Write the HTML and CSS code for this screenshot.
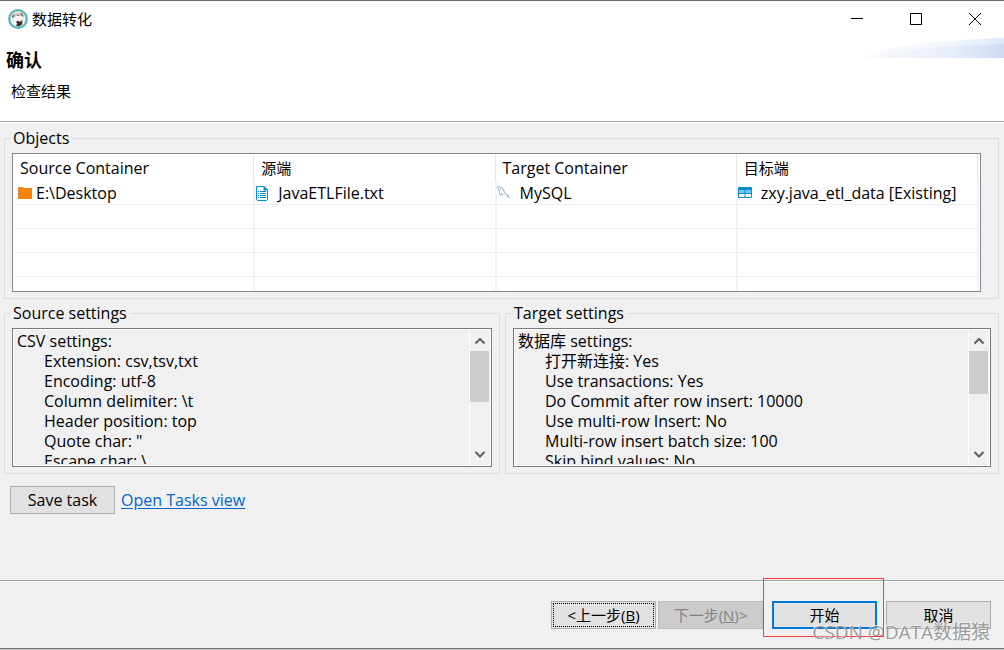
FILE: index.html
```html
<!DOCTYPE html>
<html lang="zh-CN">
<head>
<meta charset="utf-8">
<title>数据转化</title>
<link rel="stylesheet" href="styles.css">
</head>
<body>
<div class="window">
  <header class="banner">
    <div class="titlebar">
      <svg class="app-icon" width="20" height="20" viewBox="0 0 20 20" aria-hidden="true">
        <circle cx="10" cy="10" r="8.8" fill="#f3f1ef" stroke="#55b4b8" stroke-width="2.2"/>
        <path d="M4 8Q4 4 8 4L12 3.500Q15 4 16 7L15.500 9L13 7L8 7L6 9Z" fill="#c9c2bf"/>
        <path d="M4 7L5.500 6L6 7L4.500 9Z M9 6.500L11 6L10.500 7Z M12.500 4L14 4.500L15.500 7L14 6.500Z" fill="#51413d"/>
        <path d="M8 13L10 11.500L11.500 13L14.500 11L14 15.500L11 17.500L7.500 16.500L9.500 15Z" fill="#3b2d29"/>
      </svg>
      <span class="title">数据转化</span>
      <div class="window-controls">
        <button class="control" type="button" aria-label="Minimize"><svg width="12" height="12" viewBox="0 0 12 12"><path d="M0 5.500H12"/></svg></button>
        <button class="control" type="button" aria-label="Maximize"><svg width="12" height="12" viewBox="0 0 12 12"><path d="M.5.5H11.500V11.500H.5Z"/></svg></button>
        <button class="control" type="button" aria-label="Close"><svg width="12" height="12" viewBox="0 0 12 12"><path d="M0 0L12 12M12 0L0 12"/></svg></button>
      </div>
    </div>
    <h1 class="heading">确认</h1>
    <p class="subheading">检查结果</p>
    <svg class="swoosh" width="140" height="20" viewBox="0 0 140 20" aria-hidden="true">
      <defs>
        <linearGradient id="back"><stop offset="0" stop-color="#fafbfe"/><stop offset=".6" stop-color="#f2f6fc"/><stop offset="1" stop-color="#dfe8f8"/></linearGradient>
        <linearGradient id="front"><stop offset="0" stop-color="#f9fafd"/><stop offset=".6" stop-color="#e8eef9"/><stop offset="1" stop-color="#d0daf5"/></linearGradient>
      </defs>
      <path d="M0 20Q22 4 140 0V20Z" fill="url(#back)"/>
      <path d="M0 20Q38 9 140 6V20Z" fill="url(#front)"/>
    </svg>
  </header>

  <main class="content">
    <fieldset class="group objects">
      <legend>Objects</legend>
      <div class="table-box">
        <table class="grid">
          <thead>
            <tr><th>Source Container</th><th class="cjk">源端</th><th>Target Container</th><th class="cjk">目标端</th></tr>
          </thead>
          <tbody>
            <tr>
              <td><div class="cell"><svg width="22" height="16" viewBox="0 0 22 16" aria-hidden="true"><path d="M4 2.500Q4 2 4.500 2H8.500L10 3H17.500Q18 3 18 3.500V13.500Q18 14 17.500 14H4.500Q4 14 4 13.500Z" fill="#f28411"/></svg><span>E:\Desktop</span></div></td>
              <td><div class="cell spaced"><svg width="16" height="16" viewBox="0 0 16 16" aria-hidden="true"><path d="M1.500 1.500H9L12.500 5V14.500L11.500 15.500H2.500L1.500 14.500Z" fill="#fff" stroke="#008fcb"/><path d="M8.500 1V5.500H13L9 1Z" fill="#008fcb"/><path d="M3 6.500H4M5 6.500H11M3 8.500H4M5 8.500H11M3 10.500H4M5 10.500H11M3 12.500H4M5 12.500H11" stroke="#008fcb"/></svg><span>JavaETLFile.txt</span></div></td>
              <td><div class="cell spaced"><svg width="16" height="16" viewBox="0 0 16 16" fill="none" aria-hidden="true"><path d="M.5 1.500L3 2Q6 3 7.500 7Q8.500 10 11.500 10.500L10.500 11.500L12.500 13M.5 1.500L1 3.500L2.500 6L2.500 9L3.500 10L4.500 8.500L6 10" stroke="#a6bfd0" stroke-width="1.100"/><path d="M3 4.500H4" stroke="#a6bfd0"/></svg><span>MySQL</span></div></td>
              <td><div class="cell spaced"><svg width="16" height="16" viewBox="0 0 16 16" aria-hidden="true"><rect x="0" y="2" width="14" height="11" rx="1" fill="#008fcb"/><path d="M1 5H6.500V8H1ZM7.500 5H13V8H7.500Z" fill="#76c8eb"/><path d="M1 9H6.500V12H1ZM7.500 9H13V12H7.500Z" fill="#fff"/></svg><span>zxy.java_etl_data [Existing]</span></div></td>
            </tr>
            <tr><td></td><td></td><td></td><td></td></tr>
            <tr><td></td><td></td><td></td><td></td></tr>
            <tr><td></td><td></td><td></td><td></td></tr>
            <tr class="partial"><td></td><td></td><td></td><td></td></tr>
          </tbody>
        </table>
      </div>
    </fieldset>

    <div class="settings">
      <fieldset class="group">
        <legend><label for="source-settings">Source settings</label></legend>
        <div class="text-box">
          <textarea id="source-settings" readonly>CSV settings:
	Extension: csv,tsv,txt
	Encoding: utf-8
	Column delimiter: \t
	Header position: top
	Quote char: "
	Escape char: \</textarea>
          <div class="scrollbar" aria-hidden="true">
            <svg class="arrow" viewBox="0 0 20 21"><path d="M5.500 13.500L10 9L14.500 13.500"/></svg>
            <div class="track"><div class="thumb long"></div></div>
            <svg class="arrow" viewBox="0 0 20 21"><path d="M5.500 8L10 12.500L14.500 8"/></svg>
          </div>
        </div>
      </fieldset>
      <fieldset class="group">
        <legend><label for="target-settings">Target settings</label></legend>
        <div class="text-box">
          <textarea id="target-settings" readonly>数据库 settings:
	打开新连接: Yes
	Use transactions: Yes
	Do Commit after row insert: 10000
	Use multi-row Insert: No
	Multi-row insert batch size: 100
	Skip bind values: No</textarea>
          <div class="scrollbar" aria-hidden="true">
            <svg class="arrow" viewBox="0 0 20 21"><path d="M5.500 13.500L10 9L14.500 13.500"/></svg>
            <div class="track"><div class="thumb"></div></div>
            <svg class="arrow" viewBox="0 0 20 21"><path d="M5.500 8L10 12.500L14.500 8"/></svg>
          </div>
        </div>
      </fieldset>
    </div>

    <div class="task-row">
      <button class="button" type="button">Save task</button>
      <a href="#tasks">Open Tasks view</a>
    </div>
  </main>

  <footer class="actions cjk">
    <div class="pager">
      <button class="button focused" type="button">&lt;上一步(<u>B</u>)</button>
      <button class="button" type="button" disabled>下一步(<u>N</u>)&gt;</button>
    </div>
    <div class="start">
      <button class="button primary" type="button">开始</button>
      <div class="highlight"></div>
    </div>
    <button class="button" type="button">取消</button>
    <div class="watermark">CSDN @DATA数据猿</div>
  </footer>
</div>
</body>
</html>
```
FILE: styles.css
```css
* { box-sizing: border-box; }

body {
  margin: 0;
  background: #c8c8c8;
  color: #000;
  font: 16px/20px "Open Sans", "Noto Sans CJK SC", sans-serif;
}

button, textarea { font: inherit; color: inherit; }

.cjk { font-size: 15px; }

.window {
  display: flex;
  flex-direction: column;
  min-height: calc(100vh - 1px);
  background: #f0f0f0;
  border-top: 1px solid #6c6a70;
  border-bottom: 1px solid #707070;
}

.banner {
  position: relative;
  height: 122px;
  background: #fff;
  border-bottom: 1px solid #fff;
  box-shadow: inset 0 -1px #a0a0a0;
  font-size: 15px;
}

.titlebar {
  display: flex;
  align-items: center;
  height: 36px;
  padding-left: 8px;
}

.title { margin-left: 4px; }

.window-controls { display: flex; margin-left: auto; }

.control {
  display: grid;
  place-items: center;
  width: 59px;
  height: 36px;
  padding: 0;
  border: 0;
  background: none;
}

.control svg { fill: none; stroke: #000; }

.heading {
  margin: 11px 0 0 6px;
  font-size: 18px;
  line-height: 24px;
}

.subheading { margin: 9px 0 0 11px; }

.swoosh { position: absolute; top: 37px; right: 0; }

.content { flex: 1; padding: 5px 5px 0 4px; }

.group {
  min-width: 0;
  margin: 0;
  padding: 5px 7px 6px;
  border: 1px solid #dcdcdc;
}

.group legend { margin-left: -2px; padding: 0 3px; }

.objects { padding-right: 17px; }

.table-box {
  height: 139px;
  padding: 0 1px;
  overflow: hidden;
  background: #fff;
  border: 1px solid #828790;
}

.grid {
  width: 100%;
  table-layout: fixed;
  border-collapse: separate;
  border-spacing: 0;
}

.grid th {
  height: 27px;
  padding: 0 0 0 6px;
  font-weight: normal;
  text-align: left;
  border-right: 1px solid #fff;
  box-shadow: inset -1px 0 #e5e5e5;
}

.grid td {
  height: 24px;
  padding: 0;
  border-right: 2px solid #edf2fb;
  border-bottom: 1px solid #f0f0f0;
}

.grid .partial td { height: 14px; border-bottom: 0; }

.cell { display: flex; align-items: center; white-space: nowrap; }

.cell.spaced { gap: 7px; }

.settings {
  display: grid;
  grid-template-columns: minmax(0, 496fr) minmax(0, 494fr);
  gap: 5px;
  margin-top: 4px;
}

.text-box {
  display: flex;
  height: 139px;
  padding: 1px;
  border: 1px solid #7a7a7a;
  box-shadow: inset 0 0 0 1px #fff;
}

.text-box textarea {
  flex: 1;
  min-width: 0;
  margin: 1px 0;
  padding: 0 3px;
  overflow: hidden;
  resize: none;
  tab-size: 27px;
  border: 0;
  outline: 0;
  background: #f0f0f0;
}

.scrollbar {
  display: flex;
  flex-direction: column;
  width: 21px;
  border-left: 1px solid #fff;
}

.arrow {
  width: 20px;
  height: 21px;
  fill: none;
  stroke: #606060;
  stroke-width: 2;
}

.track { flex: 1; }

.thumb { width: 19px; height: 43px; background: #cdcdcd; }

.thumb.long { height: 51px; }

.task-row {
  display: flex;
  align-items: center;
  gap: 6px;
  padding: 12px 6px;
}

.task-row a { color: #0066cc; text-underline-offset: 2px; }

.button {
  width: 105px;
  height: 28px;
  padding: 0;
  background: #e1e1e1;
  border: 1px solid #adadad;
}

.button:disabled { color: #838383; background: #cccccc; border-color: #bfbfbf; }

.button.focused { outline: 1px dotted #000; outline-offset: -3px; }

.button.primary { border: 2px solid #0078d7; }

.actions {
  position: relative;
  display: flex;
  justify-content: flex-end;
  gap: 9px;
  padding: 20px 13px 19px;
  border-top: 1px solid #a0a0a0;
  box-shadow: inset 0 1px #fff;
}

.pager { display: flex; gap: 2px; }

.start { position: relative; }

.highlight {
  position: absolute;
  inset: -23px -7px -8px -9px;
  border: 1px solid #fa3c3c;
  pointer-events: none;
}

.watermark {
  position: absolute;
  right: 14px;
  bottom: 4px;
  color: rgba(145, 145, 145, 0.9);
  font-size: 19px;
  line-height: 24px;
  text-shadow: -1px -1px rgba(255, 255, 255, 0.6);
  pointer-events: none;
}
```
